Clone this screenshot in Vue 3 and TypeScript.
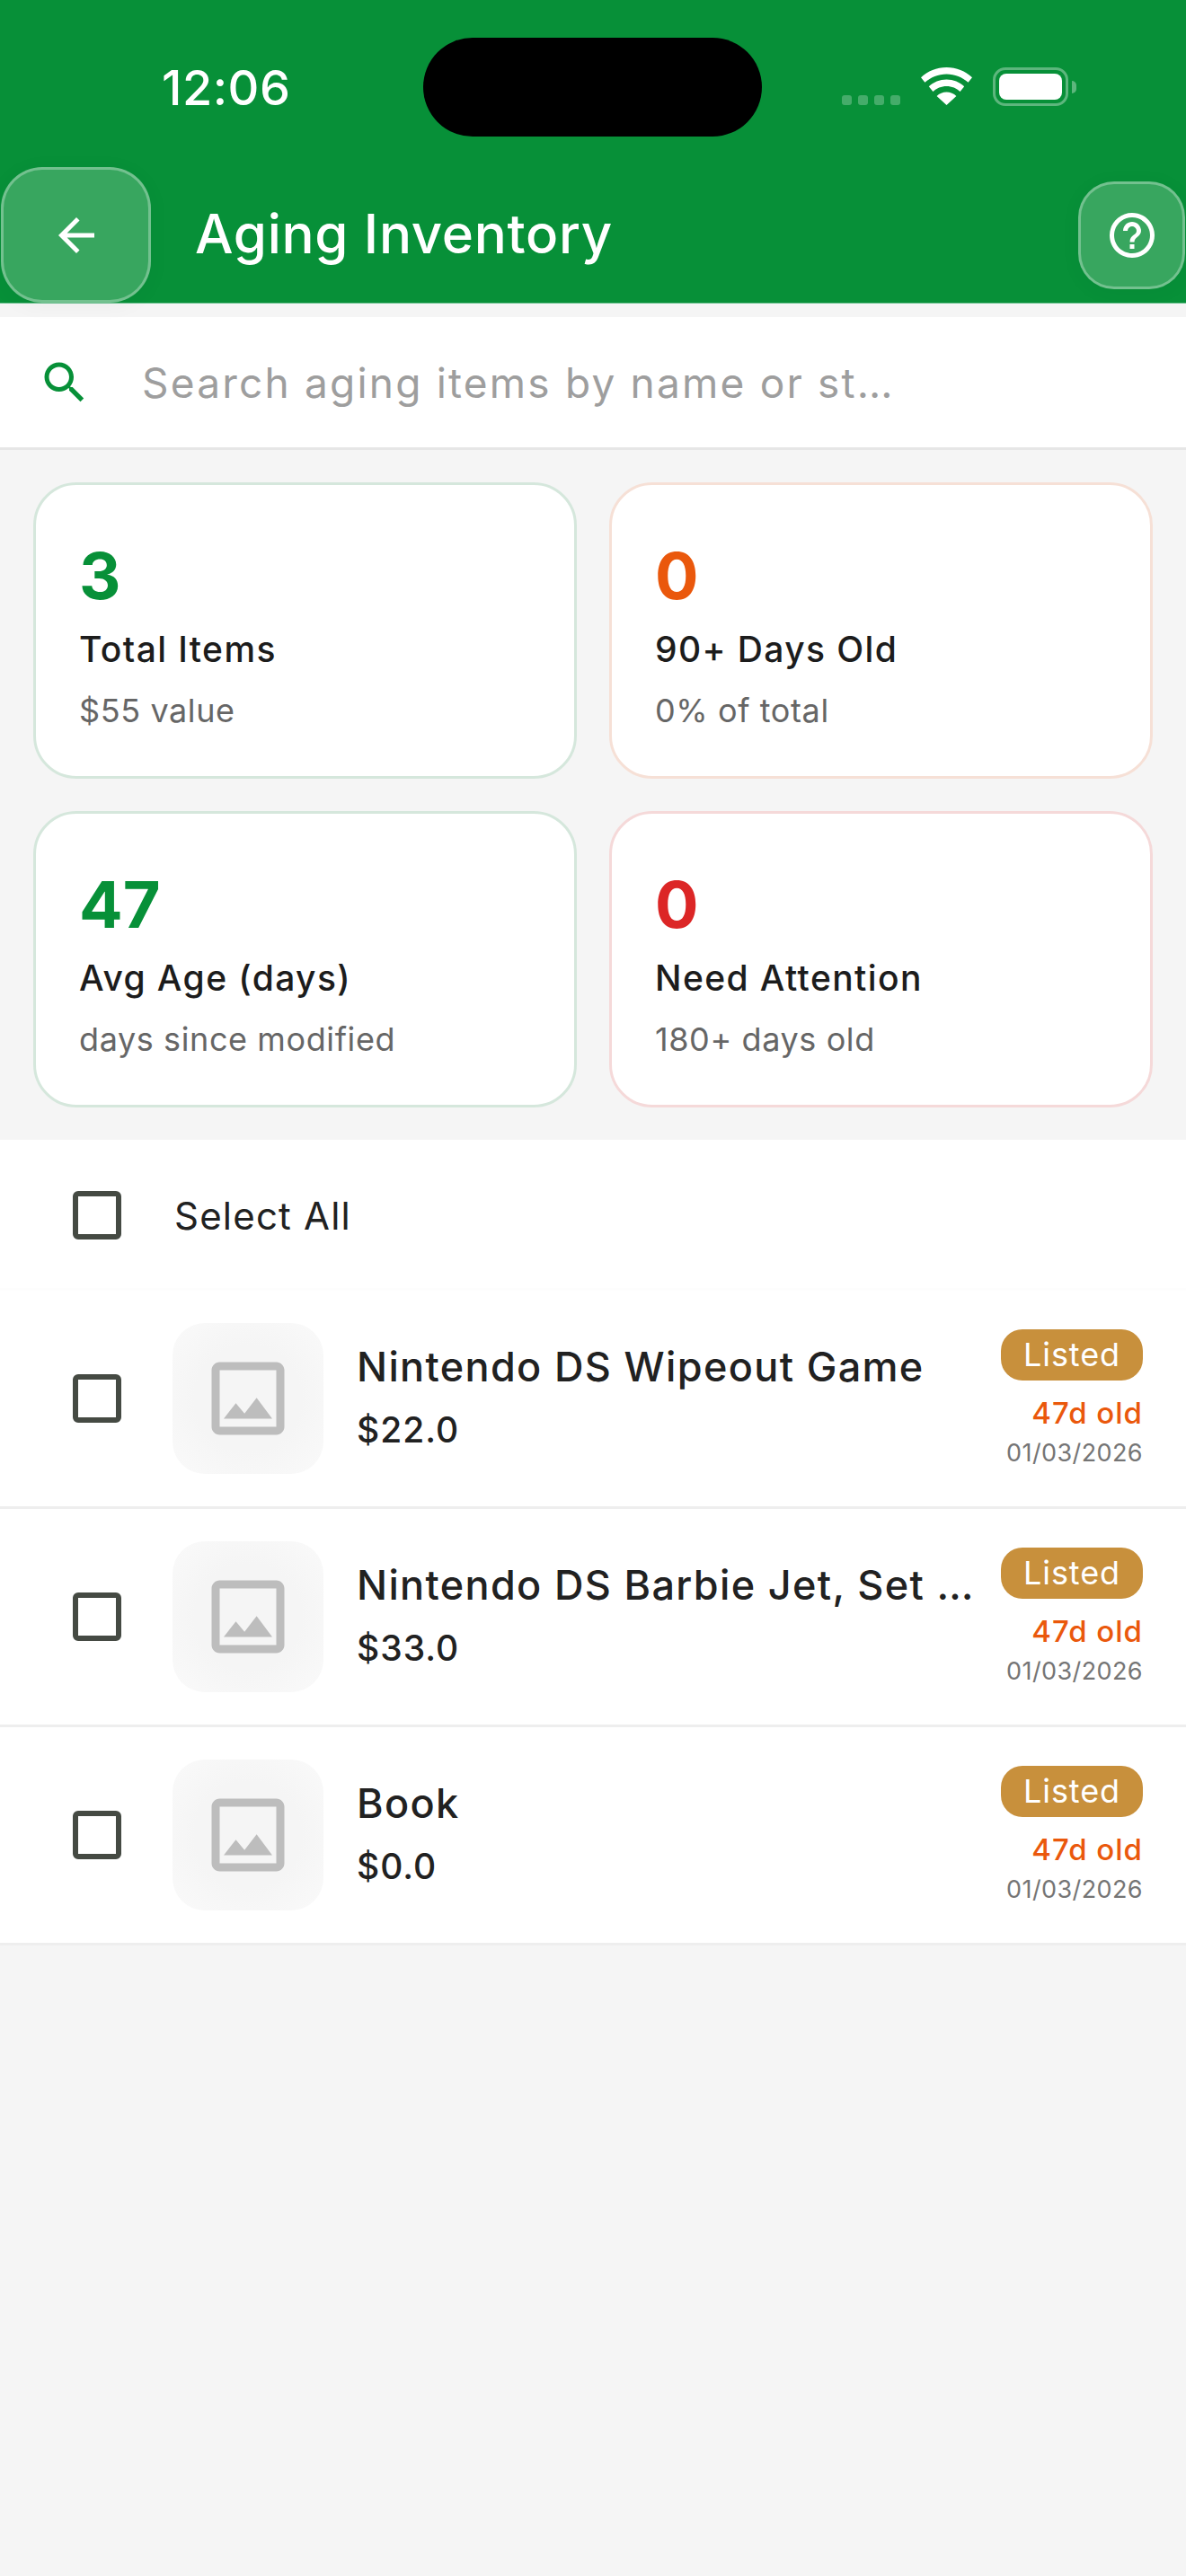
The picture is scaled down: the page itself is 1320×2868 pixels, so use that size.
<script setup lang="ts">
interface Stat { value: string; label: string; sub: string; tone: string }
interface Item { name: string; price: string }
const stats: Stat[] = [
  { value: '3', label: 'Total Items', sub: '$55 value', tone: 'green' },
  { value: '0', label: '90+ Days Old', sub: '0% of total', tone: 'orange' },
  { value: '47', label: 'Avg Age (days)', sub: 'days since modified', tone: 'green' },
  { value: '0', label: 'Need Attention', sub: '180+ days old', tone: 'red' }
]
const items: Item[] = [
  { name: 'Nintendo DS Wipeout Game', price: '$22.0' },
  { name: 'Nintendo DS Barbie Jet, Set …', price: '$33.0' },
  { name: 'Book', price: '$0.0' }
]
</script>

<template>
  <div class="page">
    <header class="header">
      <div class="status">
        <span class="time">12:06</span>
        <div class="island"></div>
        <div class="status-icons">
          <div class="dots"><i></i><i></i><i></i><i></i></div>
          <svg class="wifi" width="57" height="42" viewBox="0 0 57 42">
            <path fill="#fff" d="M28.5 0C17.5 0 7.6 4.2 0 11.2l4.4 5.6C10.9 10.9 19.3 7.4 28.5 7.4s17.6 3.5 24.1 9.4l4.4-5.6C49.4 4.2 39.5 0 28.5 0Z" />
            <path fill="#fff" d="M28.5 13.6c-7.6 0-14.5 2.9-19.7 7.6l4.6 5.7c3.9-3.7 9.3-6 15.1-6s11.2 2.3 15.1 6l4.6-5.7C43 16.5 36.1 13.6 28.5 13.6Z" />
            <path fill="#fff" d="M28.5 27.6c-4.2 0-8 1.6-10.9 4.3L28.5 42l10.9-10.1c-2.9-2.7-6.7-4.3-10.9-4.3Z" />
          </svg>
          <div class="battery"><div class="battery-fill"></div></div>
          <div class="battery-cap"></div>
        </div>
      </div>
      <div class="toolbar">
        <button class="glass back" type="button" aria-label="Back">
          <svg width="60" height="60" viewBox="0 0 24 24"><path fill="#fff" d="M20 11H7.83l5.59-5.59L12 4l-8 8 8 8 1.41-1.41L7.83 13H20v-2z" /></svg>
        </button>
        <h1 class="title">Aging Inventory</h1>
        <button class="glass help" type="button" aria-label="Help">
          <svg width="60" height="60" viewBox="0 0 24 24"><path fill="#fff" d="M11 18h2v-2h-2v2zm1-16C6.48 2 2 6.48 2 12s4.48 10 10 10 10-4.48 10-10S17.52 2 12 2zm0 18c-4.41 0-8-3.59-8-8s3.59-8 8-8 8 3.59 8 8-3.59 8-8 8zm0-14c-2.21 0-4 1.79-4 4h2c0-1.1.9-2 2-2s2 .9 2 2c0 2-3 1.75-3 5h2c0-2.25 3-2.5 3-5 0-2.21-1.79-4-4-4z" /></svg>
        </button>
      </div>
    </header>

    <div class="search">
      <svg width="60" height="60" viewBox="0 0 24 24"><path fill="#079038" d="M15.5 14h-.79l-.28-.27C15.41 12.59 16 11.11 16 9.5 16 5.91 13.09 3 9.5 3S3 5.91 3 9.5 5.91 16 9.5 16c1.61 0 3.09-.59 4.23-1.57l.27.28v.79l5 4.99L20.49 19l-4.99-5zm-6 0C7.01 14 5 11.99 5 9.5S7.01 5 9.5 5 14 7.01 14 9.5 11.99 14 9.5 14z" /></svg>
      <span class="placeholder">Search aging items by name or st…</span>
    </div>

    <section class="stats">
      <div v-for="s in stats" :key="s.label" class="card" :class="s.tone">
        <div class="value">{{ s.value }}</div>
        <div class="label">{{ s.label }}</div>
        <div class="sub">{{ s.sub }}</div>
      </div>
    </section>

    <section class="list">
      <div class="select-all">
        <span class="check"></span>
        <span class="select-text">Select All</span>
      </div>
      <div v-for="it in items" :key="it.name" class="row">
        <span class="check"></span>
        <div class="thumb">
          <svg width="108" height="108" viewBox="0 0 24 24"><path fill="#bdbdbd" d="M19 5v14H5V5h14m0-2H5c-1.1 0-2 .9-2 2v14c0 1.1.9 2 2 2h14c1.1 0 2-.9 2-2V5c0-1.1-.9-2-2-2zm-4.86 8.86l-3 3.87L9 13.14 6 17h12l-3.86-5.14z" /></svg>
        </div>
        <div class="info">
          <div class="name">{{ it.name }}</div>
          <div class="price">{{ it.price }}</div>
        </div>
        <div class="meta">
          <span class="badge">Listed</span>
          <span class="age">47d old</span>
          <span class="date">01/03/2026</span>
        </div>
      </div>
    </section>
  </div>
</template>

<style>
html, body { margin: 0; background: #f5f5f5; }
</style>

<style scoped>
.page {
  width: 1320px;
  min-height: 2868px;
  background: #f5f5f5;
  font-family: Inter, "Noto Sans", sans-serif;
  color: #212121;
  overflow: hidden;
}
.header {
  height: 338px;
  box-sizing: border-box;
  background: #079038;
  border-bottom: 1px solid #6fc292;
  position: relative;
}
.status {
  height: 186px;
  display: flex;
  justify-content: space-between;
  align-items: flex-start;
}
.time {
  margin: 69px 0 0 180px;
  font-size: 54px;
  line-height: 58px;
  font-weight: 500;
  color: #fff;
  letter-spacing: 0.5px;
}
.island {
  position: absolute;
  left: 471px;
  top: 42px;
  width: 377px;
  height: 110px;
  border-radius: 55px;
  background: #000;
}
.status-icons {
  display: flex;
  align-items: flex-start;
  margin: 75px 122px 0 0;
}
.dots {
  display: flex;
  gap: 7px;
  margin: 31px 23px 0 0;
}
.dots i {
  width: 11px;
  height: 11px;
  border-radius: 3px;
  background: rgba(255, 255, 255, 0.25);
}
.wifi { margin-right: 23px; }
.battery {
  width: 84px;
  height: 43px;
  box-sizing: border-box;
  padding: 4px;
  border: 3px solid rgba(255, 255, 255, 0.35);
  border-radius: 14px;
}
.battery-fill {
  width: 100%;
  height: 100%;
  background: #fff;
  border-radius: 8px;
}
.battery-cap {
  width: 5px;
  height: 14px;
  margin: 15px 0 0 4px;
  border-radius: 0 5px 5px 0;
  background: rgba(255, 255, 255, 0.35);
}
.toolbar {
  height: 151px;
  display: flex;
  align-items: center;
  padding: 0 1px;
}
.glass {
  display: flex;
  align-items: center;
  justify-content: center;
  padding: 0;
  box-sizing: border-box;
  background: rgba(255, 255, 255, 0.2);
  border: 3px solid rgba(255, 255, 255, 0.3);
  box-shadow: 0 3px 24px rgba(0, 0, 0, 0.04);
}
.back {
  width: 167px;
  height: 151px;
  border-radius: 46px;
}
.help {
  width: 119px;
  height: 120px;
  border-radius: 40px;
  margin-left: auto;
}
.title {
  margin: 0 0 3px 49px;
  font-size: 60px;
  line-height: 72px;
  font-weight: 500;
  color: #fff;
  letter-spacing: 0.7px;
}
.search {
  margin-top: 15px;
  height: 148px;
  box-sizing: border-box;
  background: #fff;
  border-bottom: 3px solid #e6e6e6;
  display: flex;
  align-items: center;
  padding-left: 42px;
  gap: 56px;
}
.placeholder {
  font-size: 46px;
  color: #9e9e9e;
  letter-spacing: 2.2px;
}
.stats {
  display: grid;
  grid-template-columns: 605px 605px;
  gap: 36px;
  padding: 36px 37px;
}
.card {
  height: 330px;
  box-sizing: border-box;
  background: #fff;
  border: 3px solid #d5e7dc;
  border-radius: 48px;
  padding: 59px 0 0 48px;
}
.card.orange { border-color: #f6e0d6; }
.card.red { border-color: #f5d9d9; }
.value {
  font-size: 72px;
  line-height: 84px;
  font-weight: 700;
}
.green .value { color: #079038; }
.orange .value { color: #ea580c; }
.red .value { color: #dc2626; }
.label {
  margin-top: 16px;
  font-size: 39px;
  line-height: 48px;
  font-weight: 500;
  color: #1c1c1c;
  letter-spacing: 1.4px;
}
.sub {
  margin-top: 22px;
  font-size: 36px;
  line-height: 44px;
  color: #666;
  letter-spacing: 0.6px;
}
.list { background: #fff; }
.select-all {
  height: 168px;
  box-sizing: border-box;
  padding: 3px 0 0 81px;
  border-bottom: 3px solid #fdfdfd;
  display: flex;
  align-items: center;
  gap: 59px;
}
.select-text {
  font-size: 42px;
  letter-spacing: 1.2px;
  color: #212121;
}
.check {
  flex: none;
  width: 54px;
  height: 54px;
  box-sizing: border-box;
  border: 6px solid #454a43;
  border-radius: 6px;
}
.row {
  height: 243px;
  box-sizing: border-box;
  border-bottom: 3px solid #eeeeee;
  display: flex;
  align-items: center;
  padding: 0 48px 0 81px;
}
.thumb {
  flex: none;
  width: 168px;
  height: 168px;
  margin-left: 57px;
  border-radius: 36px;
  background: radial-gradient(circle, #f5f5f5 50%, #fafafa 100%);
  display: flex;
  align-items: center;
  justify-content: center;
}
.info {
  flex: 1;
  min-width: 0;
  margin: 0 0 3px 37px;
}
.name {
  font-size: 45px;
  line-height: 56px;
  font-weight: 500;
  white-space: nowrap;
  letter-spacing: 1.35px;
}
.price {
  margin-top: 17px;
  font-size: 39px;
  line-height: 50px;
  font-weight: 500;
  letter-spacing: 1px;
}
.meta {
  flex: none;
  display: flex;
  flex-direction: column;
  align-items: flex-end;
}
.badge {
  height: 57px;
  box-sizing: border-box;
  padding: 0 25px;
  border-radius: 24px;
  background: #c8903c;
  color: #fff;
  font-size: 36px;
  line-height: 57px;
  letter-spacing: 0.9px;
}
.age {
  margin-top: 16px;
  font-size: 33px;
  line-height: 40px;
  font-weight: 500;
  color: #ea580c;
  letter-spacing: 1px;
}
.date {
  margin-top: 8px;
  font-size: 27px;
  line-height: 34px;
  color: #757575;
  letter-spacing: 0.4px;
}
</style>
